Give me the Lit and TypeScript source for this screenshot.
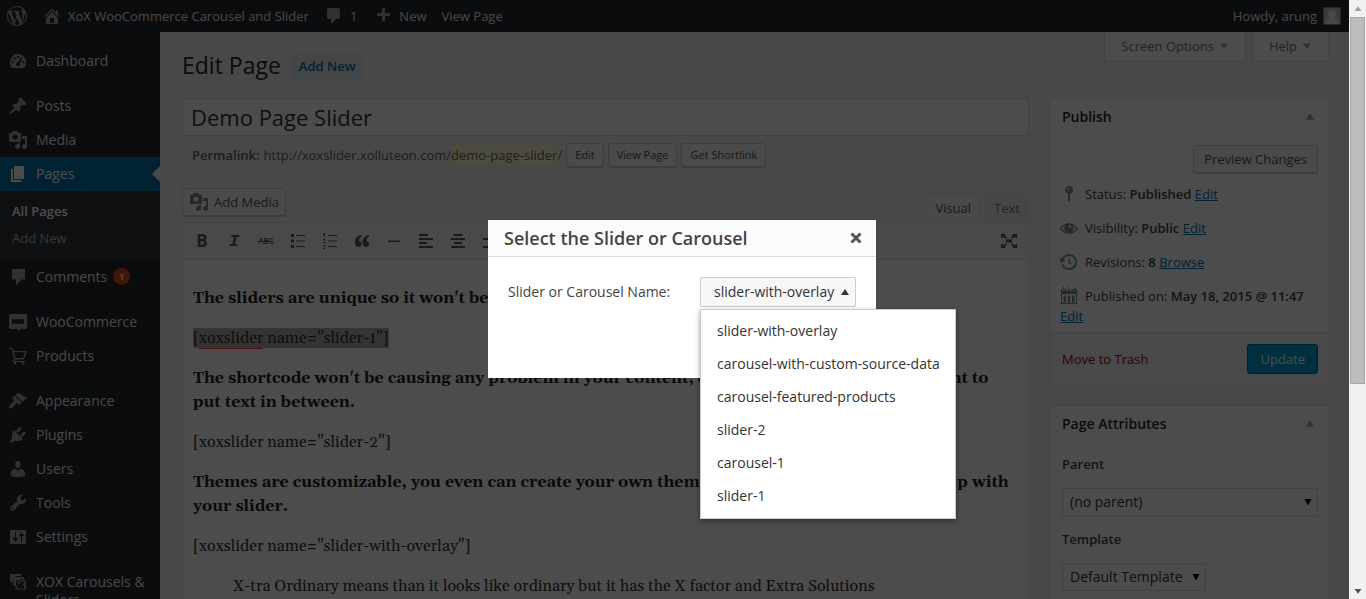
import { LitElement, html, css, svg } from "lit";
import { customElement, state } from "lit/decorators.js";
import { classMap } from "lit/directives/class-map.js";

const ICONS: Record<string, string> = {
  wordpress: "M20 10c0-5.51-4.49-10-10-10C4.48 0 0 4.49 0 10c0 5.52 4.48 10 10 10 5.51 0 10-4.48 10-10zM7.78 15.37L4.37 6.22c.55-.02 1.17-.08 1.17-.08.5-.06.44-1.13-.06-1.11 0 0-1.45.11-2.37.11-.18 0-.37 0-.58-.01C4.12 2.69 6.87 1.11 10 1.11c2.33 0 4.45.87 6.05 2.34-.68-.11-1.65.39-1.65 1.58 0 .74.45 1.36.9 2.1.35.61.55 1.36.55 2.46 0 1.49-1.4 5-1.4 5l-3.03-8.37c.54-.02.82-.17.82-.17.5-.05.44-1.25-.06-1.22 0 0-1.44.12-2.38.12-.87 0-2.33-.12-2.33-.12-.5-.03-.56 1.2-.06 1.22l.92.08 1.26 3.41zM17.41 10c.24-.64.74-1.87.43-4.25.7 1.29 1.05 2.71 1.05 4.25 0 3.29-1.73 6.24-4.4 7.78.97-2.59 1.94-5.2 2.92-7.78zM6.1 18.09C3.12 16.65 1.11 13.53 1.11 10c0-1.3.23-2.48.72-3.59C3.25 10.3 4.67 14.2 6.1 18.09zm4.03-6.63l2.58 6.98c-.86.29-1.76.45-2.71.45-.79 0-1.57-.11-2.29-.33.81-2.38 1.62-4.74 2.42-7.1z",
  home: "M16 8.5l1.53 1.53-1.06 1.06L10 4.6l-6.47 6.49-1.06-1.06L10 2.5l4 4v-2h2v4zm-6-2.46l6 5.99V18H4v-5.97zM12 17v-5H8v5h4z",
  bubble: "M5 2h9c1.1 0 2 .9 2 2v7c0 1.1-.9 2-2 2h-2l-5 5v-5H5c-1.1 0-2-.9-2-2V4c0-1.1.9-2 2-2z",
  plus: "M17 7v3h-5v5H9v-5H4V7h5V2h3v5h5z",
  dashboard: "M3.8 17h12.4c1.4-1.6 1.8-3.6 1.8-6 0-4.500-3.600-8-8-8s-8 3.500-8 8c0 2.400.400 4.400 1.800 6zM9 5h2v2H9zM5.500 6.500h2v2h-2zM3.500 10h2v2h-2zM14.500 10h2v2h-2zM13.500 6l1 .8-2.700 5.600c.5 1.500-.4 2.600-1.800 2.600-1.300 0-2.200-1.200-1.700-2.400.3-.7.900-1.100 1.600-1.200z",
  pin: "M10.44 3.02l1.82-1.82 6.36 6.35-1.83 1.82c-1.05-.68-2.48-.57-3.41.36l-.75.75c-.92.93-1.04 2.35-.35 3.41l-1.83 1.82-2.41-2.41-2.8 2.79c-.42.42-3.38 2.71-3.8 2.29s1.86-3.39 2.28-3.81l2.79-2.79L4.1 9.36l1.83-1.82c1.05.69 2.48.57 3.4-.36l.75-.75c.93-.92 1.05-2.35.36-3.41z",
  media: "M13 11V4c0-.55-.45-1-1-1h-1.67L9 1H5L3.67 3H2c-.55 0-1 .45-1 1v7c0 .55.45 1 1 1h10c.55 0 1-.45 1-1zM7 4.500c1.38 0 2.500 1.120 2.500 2.500S8.38 9.500 7 9.500 4.500 8.38 4.500 7 5.620 4.500 7 4.500zM14 6h5v10.500c0 1.38-1.12 2.500-2.500 2.500S14 17.88 14 16.500s1.120-2.500 2.500-2.500c.17 0 .34.02.5.05V9h-3V6zm-4 8.050V13h2v3.500c0 1.38-1.12 2.500-2.500 2.500S7 17.88 7 16.500 8.120 14 9.500 14c.17 0 .34.02.5.05z",
  pages: "M6 15V2h10v13H6zm-1 1h8v2H3V5h2v11z",
  comments: "M5 2h12v10.500h-3.500L8 18v-5.500H4V3c0-.6.4-1 1-1z",
  woo: "M2.500 2h15c.8 0 1.500.7 1.500 1.500v12c0 .8-.7 1.500-1.500 1.500H13l-2 2-2-2H2.500C1.700 17 1 16.300 1 15.500v-12C1 2.700 1.700 2 2.500 2zM4 7v5h1.500l1-1.500 1 1.500h1l1-1 1 1h1.500l1-1 1 1H16V7h-2l-1 1-1-1h-1.500l-1 1-1-1H7.500l-1 1.500L5.500 7z",
  cart: "M1 2h3.600l1 3H19l-3 8.500H7.200l-.7 1.500H17v1.200H4.600l1.500-3.200L3.600 3.300H1zM6 6.300l1.500 5.800h7.400l2.200-5.800zM6 16.500h2v2H6zM14 16.500h2v2h-2z",
  appearance: "M14.48 11.06L7.41 3.99l1.500-1.500c.5-.56 2.300-.47 3.510.32 1.210.8 1.430 1.280 2.910 2.100 1.180.64 2.450 1.260 4.450.85zm-.71.71L6.700 4.700 4.930 6.470c-.39.39-.39 1.020 0 1.410l1.060 1.060c.39.39.39 1.030 0 1.420-.6.6-1.430 1.110-2.210 1.690-.35.26-.7.53-1.010.84C1.430 14.230.4 16.080 1.400 17.070c.99 1 2.840-.03 4.180-1.360.31-.31.58-.66.85-1.020.57-.78 1.080-1.610 1.690-2.210.39-.39 1.020-.39 1.410 0l1.060 1.060c.39.39 1.020.39 1.410 0z",
  plugins: "M13.11 4.36L9.87 7.600 8 5.730l3.240-3.240c.35-.34 1.050-.2 1.560.32.52.51.66 1.210.31 1.550zm-8 1.770l.91-1.120 9.010 9.010-1.190.84c-.71.71-2.630 1.160-3.820 1.160H6.140L4.900 17.260c-.59.59-1.540.59-2.120 0-.59-.58-.59-1.530 0-2.120l1.240-1.240v-3.880c0-1.130.4-3.190 1.090-3.890zm7.260 3.970l3.240-3.240c.34-.35 1.040-.21 1.550.31.52.51.66 1.210.31 1.550l-3.240 3.250z",
  users: "M10 9.250c-2.270 0-2.730-3.440-2.730-3.440C7 4.020 7.820 2 9.970 2c2.160 0 2.980 2.020 2.710 3.810 0 0-.41 3.440-2.680 3.440zm0 2.570L12.720 10c2.390 0 4.520 2.330 4.520 4.530v2.490s-3.650 1.130-7.240 1.130c-3.650 0-7.240-1.130-7.240-1.130v-2.490c0-2.250 1.940-4.480 4.470-4.480z",
  tools: "M16.680 9.770c-1.340 1.340-3.300 1.670-4.950.99l-5.410 6.520c-.99.99-2.590.99-3.580 0s-.99-2.590 0-3.570l6.520-5.420c-.68-1.650-.35-3.610.99-4.950 1.280-1.280 3.120-1.620 4.720-1.060l-2.890 2.890 2.820 2.820 2.860-2.870c.53 1.580.18 3.390-1.080 4.650zM3.810 16.210c.4.39 1.040.39 1.430 0 .4-.4.4-1.040 0-1.430-.39-.4-1.030-.4-1.430 0-.39.39-.39 1.030 0 1.430z",
  settings: "M18 16V4c0-.55-.45-1-1-1H3c-.55 0-1 .45-1 1v12c0 .55.45 1 1 1h14c.55 0 1-.45 1-1zM8 11h1c.55 0 1 .45 1 1s-.45 1-1 1H8v1.500c0 .28-.22.5-.5.5s-.5-.22-.5-.5V13H6c-.55 0-1-.45-1-1s.45-1 1-1h1V5.500c0-.28.22-.5.5-.5s.5.22.5.5V11zm5-2h-1c-.55 0-1-.45-1-1s.45-1 1-1h1V5.500c0-.28.22-.5.5-.5s.5.22.5.5V7h1c.55 0 1 .45 1 1s-.45 1-1 1h-1v5.500c0 .28-.22.5-.5.5s-.5-.22-.5-.5V9z",
  stack: "M2 2h11v2H8L6 6v5H4.500L2 9zM7 5h9v3l-3-1.500-2 2.500-3-1v6H5.500V7zM8.500 8.500l2.500 2 2.500-2.500 4.500.5v9H7.500v-3l3-1.500zM11 12l-2 2.500V16.500h7.500V14l-2-1.500 2-1.500v-1.500h-2.500z",
  status: "M14 6c0 1.860-1.280 3.410-3 3.860V16c0 1-2 2-2 2V9.860c-1.720-.45-3-2-3-3.860 0-2.210 1.790-4 4-4s4 1.790 4 4zM8 5c0 .55.45 1 1 1s1-.45 1-1-.45-1-1-1-1 .45-1 1z",
  eye: "M18.300 9.500C15 4.900 8.500 3.800 3.900 7.200c-1.200.9-2.200 2-3 3.300.3.500.6.9.9 1.300 3.400 4.500 9.800 5.400 14.300 2 1.100-.8 2.100-1.900 2.800-3.100-.2-.4-.4-.8-.6-1.200zM10 7.500c.600-.600 1.500-.600 2 0s.5 1.500 0 2-1.500.6-2 0-.6-1.500 0-2zM10 14.300c-3 0-5.800-1.400-7.500-3.800.9-1.300 2-2.300 3.500-3-.5.800-.7 1.600-.7 2.400 0 2.600 2.100 4.600 4.700 4.600s4.700-2 4.700-4.600c0-.8-.2-1.600-.7-2.400 1.500.7 2.600 1.700 3.500 3-1.700 2.400-4.500 3.800-7.500 3.800z",
  history: "M13.650 2.880c3.930 2.010 5.480 6.840 3.470 10.770s-6.830 5.480-10.770 3.470c-1.870-.96-3.200-2.560-3.860-4.400l1.640-1.030c.45 1.570 1.520 2.950 3.080 3.760 3.010 1.540 6.690.35 8.230-2.660 1.550-3.010.36-6.690-2.650-8.240C9.780 3.010 6.100 4.200 4.560 7.210l1.880.97-4.950 3.080-.39-5.820 1.780.91C4.900 2.400 9.750.89 13.650 2.880zm-4.360 7.830C9.110 10.530 9 10.280 9 10c0-.07.03-.12.04-.19h-.01L10 5l.97 4.810L14 13l-4.500-2.120.02-.02c-.08-.04-.16-.09-.23-.15z",
  calendar: "M2 3h1.500v2h2V3h2v2h1.500V3h2v2h1.500V3h2v2h1.500V3H18v15H2zM3 8v9h14V8zM4.500 9.500h2.500v7H4.500zM8.700 9.500h2.500v7H8.700zM13 9.500h2.500v7H13zM4 1h1v3H4zM9 1h1v3H9zM15 1h1v3h-1z",
  ul: "M3 3h3v3H3zM3 8.500h3v3H3zM3 14h3v3H3zM8 4h9v1H8zM8 9.500h9v1H8zM8 15h9v1H8z",
  ol: "M4 2h1v4H4zM3 3h1v1H3zM3 8h2v1H3zM4 9h1v1H4zM3 11h3v1H3zM3 14h2v1H3zM4 15h1v1H4zM3 17h2v1H3zM8 4h9v1H8zM8 9.500h9v1H8zM8 15h9v1H8z",
  quote: "M9.500 4C6 4.500 3 7 3 11.500 3 14 4.300 16 6.500 16 8.300 16 9.600 14.800 9.600 13S8.300 10 6.700 10.100C6.900 8 8 6.200 9.800 5.200zM17 4c-3.500.5-6.500 3-6.500 7.500 0 2.500 1.300 4.500 3.500 4.500 1.800 0 3.100-1.200 3.100-3s-1.300-3-2.900-2.900c.2-2.100 1.300-3.900 3.100-4.900z",
  hr: "M4 9.500h12v1.500H4z",
  left: "M3 3h9v2H3zM3 7h14v2H3zM3 11h8v2H3zM3 15h14v2H3z",
  center: "M5.500 3h9v2h-9zM3 7h14v2H3zM6 11h8v2H6zM3 15h14v2H3z",
  right: "M8 3h9v2H8zM3 7h14v2H3zM9 11h8v2H9zM3 15h14v2H3z",
  expand: "M2 3h5L5.700 4.300 8 6.500 6.800 7.700 4.200 5.800 3 7H2zM18 3v4h-1l-1.200-1.200L13.200 7.700 12 6.500l2.300-2.200L13 3zM2 17v-4h1l1.200 1.200L6.800 12.300 8 13.500l-2.300 2.200L7 17zM18 17h-5l1.300-1.300L12 13.500l1.200-1.200 2.600 1.900L17 13h1zM7 8.500h6v3H7z",
  up: "M10 6l5 7H5z",
  down: "M10 14L5 7h10z",
  caret: "M10 17L3 4h14z",
};

function icon(name: string, size = 20) {
  return html`<svg class="icon" width=${size} height=${size} viewBox="0 0 20 20" aria-hidden="true">${svg`<path fill-rule="evenodd" d=${ICONS[name]}></path>`}</svg>`;
}

type MenuItem = { label: string; icon: string; first?: boolean; current?: boolean; count?: number };

const MENU: MenuItem[] = [
  { label: "Dashboard", icon: "dashboard" },
  { label: "Posts", icon: "pin", first: true },
  { label: "Media", icon: "media" },
  { label: "Pages", icon: "pages", current: true },
  { label: "Comments", icon: "comments", count: 1 },
  { label: "WooCommerce", icon: "woo", first: true },
  { label: "Products", icon: "cart" },
  { label: "Appearance", icon: "appearance", first: true },
  { label: "Plugins", icon: "plugins" },
  { label: "Users", icon: "users" },
  { label: "Tools", icon: "tools" },
  { label: "Settings", icon: "settings" },
  { label: "XOX Carousels & Sliders", icon: "stack", first: true },
];

const SLIDERS = [
  "slider-with-overlay",
  "carousel-with-custom-source-data",
  "carousel-featured-products",
  "slider-2",
  "carousel-1",
  "slider-1",
];

@customElement("app-root")
export class AppRoot extends LitElement {
  @state() private selected = SLIDERS[0];
  @state() private open = true;

  static styles = css`
    :host {
      display: flex;
      position: relative;
      height: 100vh;
      overflow: hidden;
      font: 13px/18px "Open Sans", "Noto Sans", sans-serif;
      color: #444;
      background: #f1f1f1;
    }
    * { box-sizing: border-box; }
    a { color: #0073aa; }
    ul { list-style: none; margin: 0; padding: 0; }
    button, input, select { font: inherit; color: inherit; margin: 0; }
    .icon { fill: currentColor; flex: none; display: block; }
    .shell { position: relative; flex: 1; min-width: 0; display: flex; flex-direction: column; overflow: hidden; }

    .bar { display: flex; align-items: center; height: 32px; flex: none; padding: 0 8px 0 7px; background: #23282d; color: #eee; }
    .bar a { display: flex; align-items: center; gap: 6px; color: #eee; text-decoration: none; }
    .bar .icon { color: #a0a5aa; }
    .bar-home { margin-left: 15px; }
    .bar-comments { margin-left: 15px; }
    .bar-new { margin-left: 16px; }
    .bar-view { margin-left: 15px; }
    .bar .account { margin-left: auto; }
    .avatar { width: 18px; height: 18px; border: 1px solid #82878c; background: #c3c4c7; }

    .body { display: flex; flex: 1; min-height: 0; }
    .menu { width: 160px; flex: none; padding-top: 12px; background: #23282d; overflow: hidden; font-size: 14px; }
    .item.first { margin-top: 11px; }
    .item > a { display: flex; gap: 8px; padding: 8px 4px 8px 8px; color: #eee; text-decoration: none; position: relative; }
    .item > a .icon { color: #a0a5aa; margin-top: -1px; margin-bottom: -1px; }
    .item.current > a { background: #0073aa; color: #fff; }
    .item.current > a .icon { color: #fff; }
    .item.current > a::after { content: ""; position: absolute; right: 0; top: 9px; border: 8px solid transparent; border-right-color: #f1f1f1; border-left-width: 0; }
    .count { display: inline-block; width: 17px; height: 17px; margin-left: 6px; border-radius: 50%; background: #d54e21; color: #fff; font: 600 9px/17px "Open Sans", sans-serif; text-align: center; vertical-align: top; }
    .submenu { padding: 7px 0 8px; background: #32373c; font-size: 13px; }
    .submenu a { display: block; padding: 4px 12px 5px; color: #b4b9be; text-decoration: none; }
    .submenu .on { color: #fff; font-weight: 600; }

    .content { flex: 1; min-width: 0; padding: 0 20px 0 22px; display: flex; flex-direction: column; overflow: hidden; }
    .top { display: flex; justify-content: space-between; align-items: flex-start; height: 66px; flex: none; }
    .heading { display: flex; align-items: center; gap: 10px; padding-top: 18px; }
    h1 { margin: 0; padding-bottom: 2px; font-size: 23px; line-height: 30px; font-weight: 400; color: #23282d; }
    .add-new { padding: 4px 8px; border-radius: 2px; background: #e4e8ea; font-weight: 600; text-decoration: none; }
    .meta-links { display: flex; gap: 6px; }
    .meta-links button { display: flex; align-items: center; gap: 2px; height: 29px; padding: 0 13px 0 16px; background: #fff; border: 1px solid #ddd; border-top: 0; color: #72777c; }
    .meta-links .icon { color: #a0a5aa; }

    .columns { display: flex; gap: 20px; align-items: flex-start; }
    .primary { flex: 1; min-width: 0; }
    .title { display: block; width: 100%; height: 38px; padding: 0 8px; border: 1px solid #ddd; background: #fff; color: #32373c; font-size: 22px; box-shadow: inset 0 1px 2px rgba(0, 0, 0, 0.07); }
    .permalink { display: flex; align-items: center; gap: 4px; padding: 7px 10px 0; color: #666; }
    .permalink b { font-weight: 600; }
    .permalink mark { background: #fffbcc; color: inherit; }
    .btn { display: inline-flex; align-items: center; justify-content: center; height: 28px; padding: 0 10px; border: 1px solid #ccc; border-radius: 3px; background: #f7f7f7; color: #555; box-shadow: 0 1px 0 #ccc; white-space: nowrap; }
    .btn.small { height: 24px; padding: 0 8px; font-size: 11px; }
    .tools-row { display: flex; justify-content: space-between; align-items: flex-end; height: 55px; }
    .tools-row .btn { gap: 5px; padding: 0 6px; margin-bottom: 6px; }
    .tools-row .btn .icon { color: #82878c; }
    .tabs { display: flex; gap: 5px; }
    .tabs button { height: 28px; padding: 0 8px 2px; border: 1px solid #e5e5e5; border-bottom: 0; background: #ebebeb; color: #777; }
    .tabs .on { background: #f5f5f5; color: #555; }
    .editor { border: 1px solid #e5e5e5; background: #fff; }
    .toolbar { display: flex; align-items: center; gap: 12px; height: 37px; padding: 0 9px; border-bottom: 1px solid #ddd; background: #f5f5f5; color: #595959; }
    .toolbar button { display: grid; place-items: center; width: 20px; height: 20px; padding: 0; border: 0; background: none; }
    .toolbar .bold { font-size: 17px; font-weight: 700; }
    .toolbar .italic { font: italic bold 17px "Liberation Mono", monospace; }
    .toolbar .strike { font-size: 8px; font-weight: 600; text-decoration: line-through; }
    .toolbar .full { margin-left: auto; }
    .doc { padding: 26px 10px 60px; color: #333; font: 16px/24px Georgia, Gelasio, "Liberation Serif", serif; }
    .doc p { margin: 0 0 16px; }
    .doc .quote { padding-left: 40px; }
    .doc b { color: #222; }
    .selection { background: #b0b0b0; }
    .typo { border-bottom: 1px solid #ff3838; }

    .side { width: 280px; flex: none; display: grid; gap: 20px; }
    .box { border: 1px solid #e5e5e5; background: #fff; }
    .box header { display: flex; align-items: center; justify-content: space-between; height: 36px; padding: 0 9px 0 12px; border-bottom: 1px solid #eee; color: #a0a5aa; }
    .box h2 { margin: 0; font-size: 14px; font-weight: 600; color: #23282d; }
    .preview { display: flex; justify-content: flex-end; padding: 10px 10px 4px; }
    .row { display: flex; align-items: center; gap: 6px; height: 34px; padding: 0 9px; color: #444; }
    .row .icon { color: #82878c; }
    .row-after { padding: 0 10px 7px; margin-top: -6px; }
    .row .text { white-space: nowrap; }
    .row b { font-weight: 600; }
    .publish { display: flex; align-items: center; justify-content: space-between; height: 52px; padding: 0 10px 0 12px; border-top: 1px solid #ddd; background: #f5f5f5; }
    .publish a { color: #a00; text-decoration: none; }
    .publish .primary-btn { height: 30px; padding: 0 12px; border: 1px solid #006799; border-radius: 3px; background: #00a0d2; color: #fff; }
    .attrs { padding: 12px 10px 16px 12px; display: flex; flex-direction: column; align-items: flex-start; }
    .attrs label { font-weight: 600; line-height: 20px; }
    .pick { position: relative; display: flex; align-items: center; margin: 14px 0 13px; }
    .pick.wide { width: 100%; }
    .pick select { appearance: none; width: 100%; height: 28px; padding: 0 22px 0 7px; border: 1px solid #ddd; border-radius: 0; background: #fff; font-size: 14px; color: #32373c; }
    .pick .icon { position: absolute; right: 5px; color: #000; pointer-events: none; }

    .shade { position: absolute; inset: 0; background: rgba(0, 0, 0, 0.7); }
    .modal { position: absolute; left: 50%; top: 50%; width: 388px; height: 158px; margin: -80px 0 0 -195px; background: #fff; color: #444; }
    .modal header { display: flex; align-items: center; justify-content: space-between; height: 37px; padding: 0 13px 0 16px; border-bottom: 1px solid #ddd; background: #fcfcfc; }
    .modal h2 { margin: 0; font-size: 18px; line-height: 36px; font-weight: 600; }
    .close { display: grid; place-items: center; width: 14px; height: 14px; padding: 0; border: 0; background: none; color: #555; }
    .field { display: flex; align-items: baseline; justify-content: space-between; padding: 20px 20px 0; font-size: 14px; }
    .combo { position: relative; width: 156px; }
    .combo-btn { display: flex; align-items: center; justify-content: space-between; width: 100%; height: 30px; padding: 0 6px 0 13px; border: 1px solid #ccc; border-radius: 2px; background: #f7f7f7; color: #333; font-size: 14px; white-space: nowrap; }
    .list { position: absolute; left: 0; top: 32px; width: 256px; padding: 5px 0; border: 1px solid #ccc; background: #fff; box-shadow: 0 2px 5px rgba(0, 0, 0, 0.4); }
    .list button { display: block; width: 100%; height: 33px; padding: 0 16px; border: 0; background: none; text-align: left; white-space: nowrap; color: #333; }

    .scroll { width: 17px; flex: none; display: flex; flex-direction: column; align-items: center; background: #f1f1f1; color: #505050; }
    .scroll .cap { display: grid; place-items: center; height: 17px; flex: none; }
    .scroll .cap.dim { color: #a0a0a0; }
    .track { flex: 1; width: 15px; }
    .thumb { height: 65%; border: 1px solid #a8a8a8; background: #bcbcbc; }
  `;

  private renderMenu() {
    return html`<nav class="menu" aria-label="Main menu">
      <ul>
        ${MENU.map(
          (m) => html`<li class=${classMap({ item: true, first: !!m.first, current: !!m.current })}>
            <a href="#">${icon(m.icon)}<span>${m.label}${m.count ? html`<span class="count">${m.count}</span>` : ""}</span></a>
            ${m.current
              ? html`<ul class="submenu">
                  <li><a class="on" href="#">All Pages</a></li>
                  <li><a href="#">Add New</a></li>
                </ul>`
              : ""}
          </li>`
        )}
      </ul>
    </nav>`;
  }

  private renderEditor() {
    return html`<div class="primary">
      <input class="title" aria-label="Title" .value=${"Demo Page Slider"} />
      <div class="permalink">
        <b>Permalink:</b>
        <span>http://xoxslider.xolluteon.com/<mark>demo-page-slider</mark>/</span>
        <button class="btn small">Edit</button>
        <button class="btn small">View Page</button>
        <button class="btn small">Get Shortlink</button>
      </div>
      <div class="tools-row">
        <button class="btn">${icon("media")}Add Media</button>
        <div class="tabs"><button class="on">Visual</button><button>Text</button></div>
      </div>
      <div class="editor">
        <div class="toolbar">
          <button class="bold" aria-label="Bold">B</button>
          <button class="italic" aria-label="Italic">I</button>
          <button class="strike" aria-label="Strikethrough">ABC</button>
          ${["ul", "ol", "quote", "hr", "left", "center", "right"].map((n) => html`<button aria-label=${n}>${icon(n)}</button>`)}
          <button class="full" aria-label="Fullscreen">${icon("expand")}</button>
        </div>
        <div class="doc">
          <p><b>The sliders are unique so it won't be conflicting with each other.</b></p>
          <p><span class="selection">[<span class="typo">xoxslider</span> name="slider-1"]</span></p>
          <p><b>The shortcode won't be causing any problem in your content, even when you actually just want to put text in between.</b></p>
          <p>[xoxslider name="slider-2"]</p>
          <p><b>Themes are customizable, you even can create your own theme easily and properly match it up with your slider.</b></p>
          <p>[xoxslider name="slider-with-overlay"]</p>
          <p class="quote">X-tra Ordinary means than it looks like ordinary but it has the X factor and Extra Solutions</p>
        </div>
      </div>
    </div>`;
  }

  private renderSide() {
    return html`<aside class="side">
      <section class="box">
        <header><h2>Publish</h2>${icon("up", 18)}</header>
        <div class="preview"><button class="btn">Preview Changes</button></div>
        <div class="row">${icon("status")}<span class="text">Status: <b>Published</b> <a href="#">Edit</a></span></div>
        <div class="row">${icon("eye")}<span class="text">Visibility: <b>Public</b> <a href="#">Edit</a></span></div>
        <div class="row">${icon("history")}<span class="text">Revisions: <b>8</b> <a href="#">Browse</a></span></div>
        <div class="row">${icon("calendar")}<span class="text">Published on: <b>May 18, 2015 @ 11:47</b></span></div>
        <div class="row-after"><a href="#">Edit</a></div>
        <div class="publish"><a href="#">Move to Trash</a><button class="primary-btn">Update</button></div>
      </section>
      <section class="box">
        <header><h2>Page Attributes</h2>${icon("up", 18)}</header>
        <div class="attrs">
          <label for="parent">Parent</label>
          <div class="pick wide"><select id="parent"><option>(no parent)</option></select>${icon("caret", 10)}</div>
          <label for="template">Template</label>
          <div class="pick"><select id="template"><option>Default Template</option></select>${icon("caret", 10)}</div>
        </div>
      </section>
    </aside>`;
  }

  private renderModal() {
    return html`<div class="modal" role="dialog" aria-labelledby="dialog-title">
      <header>
        <h2 id="dialog-title">Select the Slider or Carousel</h2>
        <button class="close" aria-label="Close">
          <svg width="14" height="14" viewBox="0 0 14 14"><path d="M2.500 2.500l9 9M11.500 2.500l-9 9" stroke="currentColor" stroke-width="3" fill="none"></path></svg>
        </button>
      </header>
      <div class="field">
        <label for="slider">Slider or Carousel Name:</label>
        <div class="combo">
          <button id="slider" class="combo-btn" aria-haspopup="listbox" aria-expanded=${this.open} @click=${() => (this.open = !this.open)}>
            ${this.selected}<svg width="8" height="6" viewBox="0 0 8 6"><path d="M4 0l4 6H0z" fill="currentColor"></path></svg>
          </button>
          ${this.open
            ? html`<div class="list" role="listbox" aria-label="Sliders">
                ${SLIDERS.map(
                  (s) => html`<button role="option" aria-selected=${s === this.selected} @click=${() => { this.selected = s; this.open = false; }}>${s}</button>`
                )}
              </div>`
            : ""}
        </div>
      </div>
    </div>`;
  }

  render() {
    return html`
      <div class="shell">
        <div class="bar">
          <a href="#" aria-label="WordPress">${icon("wordpress")}</a>
          <a class="bar-home" href="#">${icon("home")}XoX WooCommerce Carousel and Slider</a>
          <a class="bar-comments" href="#">${icon("bubble")}1</a>
          <a class="bar-new" href="#">${icon("plus")}New</a>
          <a class="bar-view" href="#">View Page</a>
          <a class="account" href="#">Howdy, arung
            <svg class="avatar" viewBox="0 0 16 16" aria-hidden="true"><circle cx="8" cy="6" r="4" fill="#f0f0f0"></circle><path d="M1 16c0-5 3-6 7-6s7 1 7 6z" fill="#f0f0f0"></path></svg>
          </a>
        </div>
        <div class="body">
          ${this.renderMenu()}
          <main class="content">
            <div class="top">
              <div class="heading"><h1>Edit Page</h1><a class="add-new" href="#">Add New</a></div>
              <div class="meta-links">
                <button>Screen Options${icon("down", 16)}</button>
                <button>Help${icon("down", 16)}</button>
              </div>
            </div>
            <div class="columns">${this.renderEditor()}${this.renderSide()}</div>
          </main>
        </div>
        <div class="shade"></div>
      </div>
      <div class="scroll" aria-hidden="true">
        <div class="cap dim">${icon("up", 14)}</div>
        <div class="track"><div class="thumb"></div></div>
        <div class="cap">${icon("down", 14)}</div>
      </div>
      ${this.renderModal()}
    `;
  }
}
